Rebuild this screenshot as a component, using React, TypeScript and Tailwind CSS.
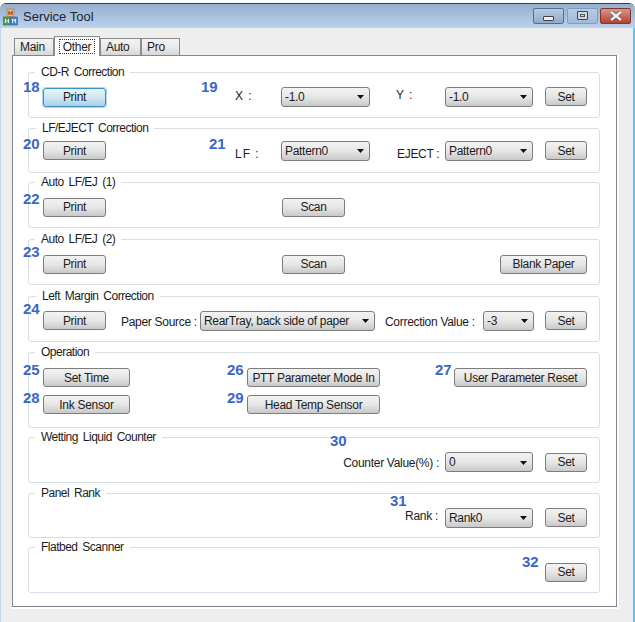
import React from "react";

const textCls = "text-[12px] tracking-[-0.3px] leading-none text-[#1c1c1c]";

function Btn({ label, className = "", focus = false }: { label: string; className?: string; focus?: boolean }) {
  return (
    <div
      className={
        "h-[19px] shrink-0 rounded-[3px] border flex items-center justify-center whitespace-nowrap " +
        textCls +
        " " +
        (focus
          ? "border-[#3c8fc0] bg-gradient-to-b from-[#e6f4fb] via-[#cfe6f3] to-[#a9d2e8] shadow-[0_0_0_1px_#a6dcf5] "
          : "border-[#7d7d7d] bg-gradient-to-b from-[#f3f3f3] via-[#e6e6e6] to-[#c9c9c9] ") +
        className
      }
    >
      {label}
    </div>
  );
}

function Sel({ value, className = "" }: { value: string; className?: string }) {
  return (
    <div
      className={
        "h-[20px] shrink-0 rounded-[3px] border border-[#7d7d7d] bg-gradient-to-b from-[#f3f3f3] via-[#e6e6e6] to-[#c9c9c9] flex items-center justify-between pl-[3px] pr-[4px] " +
        textCls +
        " " +
        className
      }
    >
      <span className="whitespace-nowrap">{value}</span>
      <svg width="7" height="4" viewBox="0 0 7 4" className="mr-[1px] mt-[1px]">
        <path d="M0 0h7L3.5 4z" fill="#111" />
      </svg>
    </div>
  );
}

function Group({
  title,
  children,
  className = "",
  titleClass = "",
}: {
  title: string;
  children?: React.ReactNode;
  className?: string;
  titleClass?: string;
}) {
  return (
    <div className={"relative w-[572px] border border-[#d5dfe5] rounded-[3px] pl-[14px] pr-[12px] " + className}>
      <span
        className={
          "absolute left-[6px] top-[-9px] bg-white px-[6px] text-[12px] tracking-[-0.5px] [word-spacing:2px] leading-[16px] text-[#1c1c1c] whitespace-nowrap " +
          titleClass
        }
      >
        {title}
      </span>
      {children}
    </div>
  );
}

function Num({ n, className }: { n: string; className: string }) {
  return <span className={"absolute text-[15px] leading-none font-bold text-[#3b67c6] " + className}>{n}</span>;
}

function Lbl({ t, className = "" }: { t: string; className?: string }) {
  return <span className={"shrink-0 whitespace-nowrap " + textCls + " " + className}>{t}</span>;
}

function Tab({ t, className = "", active = false }: { t: string; className?: string; active?: boolean }) {
  return active ? (
    <div className={"relative z-10 h-[20px] w-[46px] border border-b-0 border-[#8b8b8b] bg-white flex items-center justify-center -mb-px " + textCls + " " + className}>
      <span className="border border-dotted border-[#333] px-[3px] h-[15px] flex items-center leading-none">{t}</span>
    </div>
  ) : (
    <div className={"h-[17px] border border-b-0 border-[#8b8b8b] bg-gradient-to-b from-[#f2f2f2] via-[#ebebeb] to-[#d6d6d6] flex items-center pl-[5px] " + textCls + " " + className}>
      {t}
    </div>
  );
}

export default function App() {
  return (
    <div
      className="relative w-[635px] h-[622px] bg-white overflow-hidden text-[#111]"
      style={{ fontFamily: '"Liberation Sans", Arial, sans-serif' }}
    >
      <div className="absolute left-0 top-[3px] w-[635px] h-[619px] rounded-t-[6px] border-t border-t-[#3c3c3c] flex flex-col overflow-hidden">
        {/* title bar */}
        <div className="h-[24px] shrink-0 flex items-center bg-gradient-to-b from-[#98aecd] to-[#bcd3ef]">
          <svg width="18" height="20" viewBox="0 0 18 20" className="ml-[1px] mt-[1px]">
            <rect x="6" y="2" width="7" height="8" fill="#e9b46c" stroke="#b5743a" strokeWidth="0.6" />
            <rect x="2.5" y="10" width="7" height="8" fill="#4e9e5a" stroke="#2d6a3a" strokeWidth="0.6" />
            <rect x="9.5" y="10" width="7" height="8" fill="#4f86c9" stroke="#2c5a96" strokeWidth="0.6" />
            <path d="M8 4v4M11 4v4M8 6h3" stroke="#a3291f" strokeWidth="1" fill="none" />
            <path d="M4.5 12v4M7.5 12v4M4.5 14h3" stroke="#fff" strokeWidth="0.8" fill="none" />
            <path d="M11.5 16v-4l1.5 2 1.5-2v4" stroke="#fff" strokeWidth="0.8" fill="none" />
          </svg>
          <span className="ml-[4px] text-[13px] leading-none text-[#1a2533]">Service Tool</span>
          <div className="ml-auto mr-[4px] mt-[-1px] flex">
            <div className="w-[31px] h-[16px] rounded-[2px] border border-[#54708e] bg-gradient-to-b from-[#b8cde4] to-[#8fa9c8] flex items-end justify-center pb-[2px]">
              <div className="w-[11px] h-[5px] border border-[#444] bg-[#eee] rounded-[1px]" />
            </div>
            <div className="ml-[3px] w-[31px] h-[16px] rounded-[2px] border border-[#7f9dbe] bg-gradient-to-b from-[#b8cde4] to-[#a0b9d6] flex items-center justify-center">
              <div className="w-[11px] h-[9px] border border-[#444] bg-[#cfd8e2] rounded-[1px] flex items-center justify-center">
                <div className="w-[5px] h-[3px] border border-[#555]" />
              </div>
            </div>
            <div className="ml-[2px] w-[31px] h-[16px] rounded-[2px] border border-[#7a3a33] bg-gradient-to-b from-[#d9938a] to-[#b5412f] flex items-center justify-center">
              <svg width="16" height="10" viewBox="0 0 16 10">
                <path d="M3 1l10 8M13 1L3 9" stroke="#555" strokeWidth="3.6" />
                <path d="M3 1l10 8M13 1L3 9" stroke="#f2f2f2" strokeWidth="2.4" />
              </svg>
            </div>
          </div>
        </div>
        {/* body */}
        <div className="flex-1 bg-[#eeeeee] pl-[11px] pt-[7px] border-l border-l-[#c5d7f0] border-r-2 border-r-[#5fc4f0]">
          <div className="flex items-end h-[20px] ml-[2px] relative z-10">
            <Tab t="Main" className="w-[40px]" />
            <Tab t="Other" active />
            <Tab t="Auto" className="w-[41px]" />
            <Tab t="Pro" className="w-[39px]" />
          </div>
          <div className="relative w-[605px] h-[552px] bg-white border border-[#85858f] shadow-[1px_1px_0_1px_#fff] pl-[15px] pt-[16px]">
            <Group title="CD-R Correction" className="h-[46px] flex items-center">
              <Btn label="Print" focus className="w-[63px] mt-[4px]" />
              <Lbl t="X :" className="w-[46px] ml-[129px] mt-[1px] !tracking-[1px]" />
              <Sel value="-1.0" className="w-[89px] mt-[3px]" />
              <Lbl t="Y :" className="w-[49px] ml-[26px] mt-[-1px] !tracking-[1px]" />
              <Sel value="-1.0" className="w-[88px] mt-[3px]" />
              <Btn label="Set" className="w-[42px] ml-[12px] mt-[3px]" />
            </Group>
            <Group title="LF/EJECT Correction" className="h-[45px] mt-[10px] flex items-center" titleClass="!left-[7px]">
              <Btn label="Print" className="w-[63px]" />
              <Lbl t="LF :" className="w-[46px] ml-[129px] mt-[6px] !tracking-[1px]" />
              <Sel value="Pattern0" className="w-[89px]" />
              <Lbl t="EJECT :" className="w-[48px] ml-[27px] mt-[6px]" />
              <Sel value="Pattern0" className="w-[88px]" />
              <Btn label="Set" className="w-[42px] ml-[12px]" />
            </Group>
            <Group title="Auto LF/EJ (1)" className="h-[46px] mt-[9px] flex items-center">
              <Btn label="Print" className="w-[63px] mt-[4px]" />
              <Btn label="Scan" className="w-[63px] ml-[176px] mt-[4px]" />
            </Group>
            <Group title="Auto LF/EJ (2)" className="h-[46px] mt-[11px] flex items-center">
              <Btn label="Print" className="w-[63px] mt-[4px]" />
              <Btn label="Scan" className="w-[63px] ml-[176px] mt-[4px]" />
              <Btn label="Blank Paper" className="w-[87px] ml-auto mt-[4px]" />
            </Group>
            <Group title="Left Margin Correction" className="h-[46px] mt-[11px] flex items-center" titleClass="!left-[7px]">
              <Btn label="Print" className="w-[63px] mt-[3px]" />
              <Lbl t="Paper Source :" className="w-[79px] ml-[15px] mt-[6px]" />
              <Sel value="RearTray, back side of paper" className="w-[175px] mt-[3px]" />
              <Lbl t="Correction Value :" className="w-[98px] ml-[10px] mt-[5px]" />
              <Sel value="-3" className="w-[51px] mt-[3px]" />
              <Btn label="Set" className="w-[42px] ml-[11px] mt-[3px]" />
            </Group>
            <Group title="Operation" className="h-[76px] mt-[10px] pt-[15px] flex flex-col gap-[8px]">
              <div className="flex">
                <Btn label="Set Time" className="w-[87px]" />
                <Btn label="PTT Parameter Mode In" className="w-[133px] ml-[117px]" />
                <Btn label="User Parameter Reset" className="w-[133px] ml-[74px]" />
              </div>
              <div className="flex">
                <Btn label="Ink Sensor" className="w-[87px]" />
                <Btn label="Head Temp Sensor" className="w-[133px] ml-[117px]" />
              </div>
            </Group>
            <Group title="Wetting Liquid Counter" className="h-[46px] mt-[9px] flex items-center justify-end">
              <Lbl t="Counter Value(%) :" className="mt-[5px]" />
              <Sel value="0" className="w-[88px] ml-[6px] mt-[4px]" />
              <Btn label="Set" className="w-[42px] ml-[12px] mt-[4px]" />
            </Group>
            <Group title="Panel Rank" className="h-[45px] mt-[10px] flex items-center justify-end">
              <Lbl t="Rank :" className="mt-[1px]" />
              <Sel value="Rank0" className="w-[88px] ml-[7px] mt-[4px]" />
              <Btn label="Set" className="w-[42px] ml-[12px] mt-[4px]" />
            </Group>
            <Group title="Flatbed Scanner" className="h-[46px] mt-[9px] flex items-center justify-end">
              <Btn label="Set" className="w-[42px] mt-[4px]" />
            </Group>
          </div>
        </div>
      </div>

      {/* annotation numbers */}
      <Num n="18" className="left-[23px] top-[79px]" />
      <Num n="19" className="left-[201px] top-[79px]" />
      <Num n="20" className="left-[23px] top-[136px]" />
      <Num n="21" className="left-[209px] top-[136px]" />
      <Num n="22" className="left-[23px] top-[191px]" />
      <Num n="23" className="left-[23px] top-[244px]" />
      <Num n="24" className="left-[23px] top-[301px]" />
      <Num n="25" className="left-[23px] top-[362px]" />
      <Num n="26" className="left-[227px] top-[362px]" />
      <Num n="27" className="left-[435px] top-[362px]" />
      <Num n="28" className="left-[23px] top-[390px]" />
      <Num n="29" className="left-[227px] top-[390px]" />
      <Num n="30" className="left-[330px] top-[433px]" />
      <Num n="31" className="left-[390px] top-[493px]" />
      <Num n="32" className="left-[522px] top-[554px]" />
    </div>
  );
}
